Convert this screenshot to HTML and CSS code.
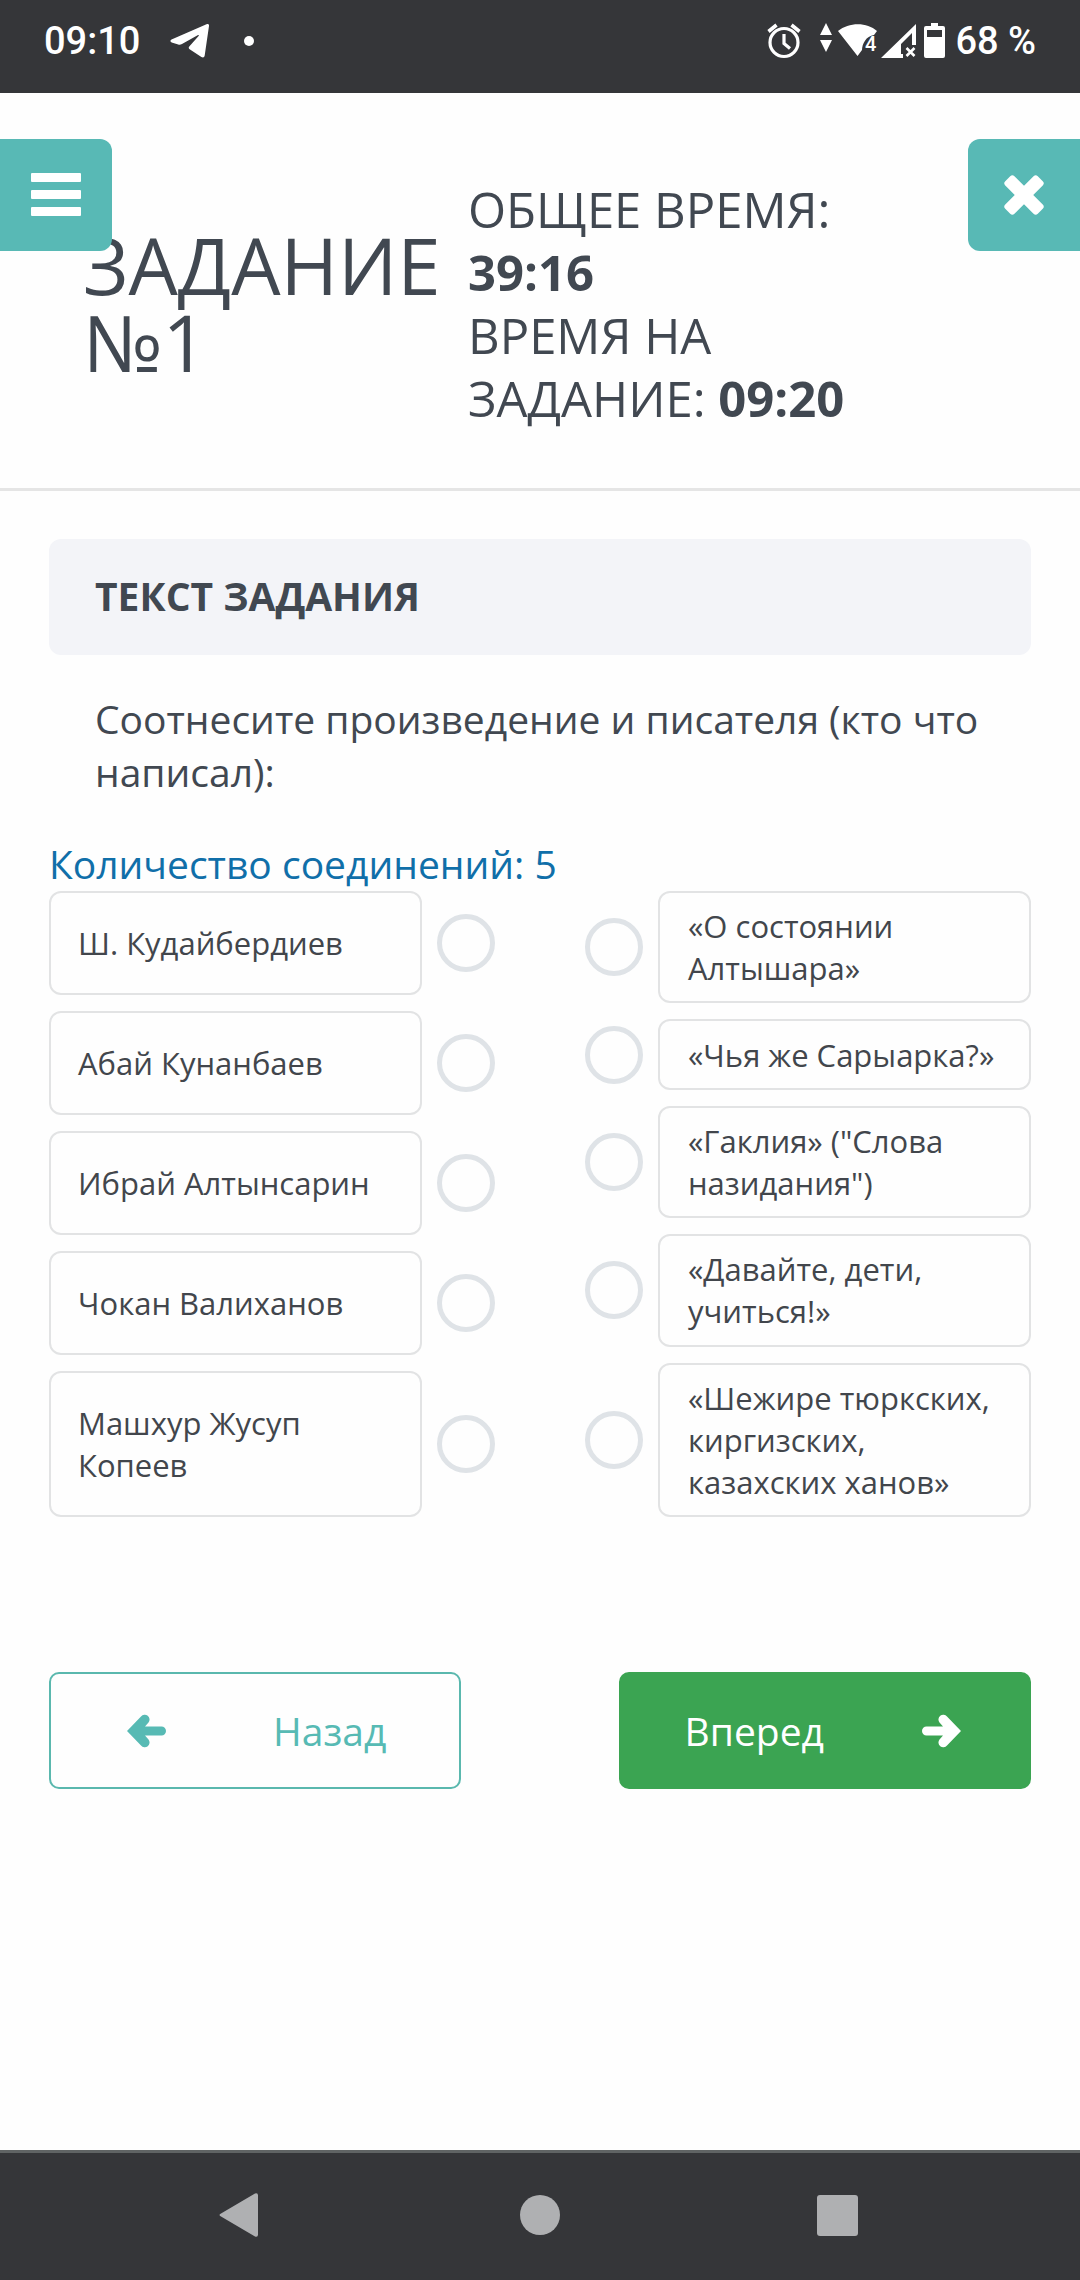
FILE: index.html
```html
<!DOCTYPE html>
<html lang="ru">
<head>
<meta charset="utf-8">
<meta name="viewport" content="width=device-width, initial-scale=1">
<title>Задание №1</title>
<link rel="stylesheet" href="styles.css">
</head>
<body>
<div class="screen">
  <div class="status">
    <div class="status-group">
      <span class="status-time">09:10</span>
      <svg class="telegram" width="40" height="36" viewBox="0 0 40 36" fill="#fff" aria-hidden="true"><path d="M1.500 16.500 36.500 1.200C38.300 .500 39.300 1.300 39 3L34.700 32.500C34.400 34.500 33 35 31.400 34L20 26.500C18.400 25.300 18.300 24.300 19.700 22.900L28.600 12.900C29.200 12 28.500 11.600 27.600 12.200L12 20.900C10.600 21.700 9.600 21.900 8.200 21.500L1.700 19.400C0 18.800 0 17.200 1.500 16.500Z"/></svg>
      <span class="dot"></span>
    </div>
    <div class="status-group">
      <svg width="180" height="36" viewBox="766 23 180 36" aria-hidden="true">
        <g fill="none" stroke="#fff">
          <circle cx="783" cy="42.500" r="14" stroke-width="3.200"/>
          <path d="M783 34v9.500l6 5" stroke-width="3.200"/>
          <path d="M767.500 31.500l8-6.500M798.500 31.500l-8-6.500" stroke-width="3.600"/>
          <path d="M905.500 48l8 8m0-8l-8 8" stroke-width="2.600"/>
        </g>
        <g fill="#fff">
          <path d="M825 23l6 12h-12zM825 52l6-12h-12z"/>
          <path d="M837 31C848 22 866 22 876 31L873 35C865 36 861 44 861 50L856.500 56Z"/>
          <path fill-rule="evenodd" d="M915 24V45h-4V33L900 44V54h2v4H880Z"/>
          <path fill-rule="evenodd" d="M930 23h7v3h5q2 0 2 2v28q0 2-2 2h-17q-2 0-2-2V28q0-2 2-2h5zM926 30v7h15v-7z"/>
          <text x="864" y="51" class="wifi-digit">4</text>
        </g>
      </svg>
      <span class="status-battery">68 %</span>
    </div>
  </div>

  <header class="header">
    <h1 class="title">Задание №1</h1>
    <div class="timers">
      <div>Общее время: <b>39:16</b></div>
      <div>Время на задание: <b>09:20</b></div>
    </div>
    <button class="corner corner-menu" type="button" aria-label="Меню">
      <svg width="50" height="44" viewBox="0 0 50 44" fill="#fff" aria-hidden="true"><rect width="50" height="9" rx="1"/><rect y="17" width="50" height="9" rx="1"/><rect y="34" width="50" height="9" rx="1"/></svg>
    </button>
    <button class="corner corner-close" type="button" aria-label="Закрыть">
      <svg width="40" height="40" viewBox="0 0 40 40" fill="#fff" aria-hidden="true"><g transform="rotate(45 20 20)"><rect x="-3" y="13.500" width="46" height="13" rx="3"/><rect x="13.500" y="-3" width="13" height="46" rx="3"/></g></svg>
    </button>
  </header>

  <main class="main">
    <h2 class="section-title">Текст задания</h2>
    <p class="question">Соотнесите произведение и писателя (кто что написал):</p>
    <p class="count">Количество соединений: 5</p>

    <form class="match">
      <div class="column authors">
        <label class="item"><span class="card">Ш. Кудайбердиев</span><input type="radio" name="author"></label>
        <label class="item"><span class="card">Абай Кунанбаев</span><input type="radio" name="author"></label>
        <label class="item"><span class="card">Ибрай Алтынсарин</span><input type="radio" name="author"></label>
        <label class="item"><span class="card">Чокан Валиханов</span><input type="radio" name="author"></label>
        <label class="item"><span class="card">Машхур Жусуп Копеев</span><input type="radio" name="author"></label>
      </div>
      <div class="column works">
        <label class="item"><input type="radio" name="work"><span class="card">«О состоянии Алтышара»</span></label>
        <label class="item"><input type="radio" name="work"><span class="card">«Чья же Сарыарка?»</span></label>
        <label class="item"><input type="radio" name="work"><span class="card">«Гаклия» ("Слова назидания")</span></label>
        <label class="item"><input type="radio" name="work"><span class="card">«Давайте, дети, учиться!»</span></label>
        <label class="item"><input type="radio" name="work"><span class="card">«Шежире тюркских, киргизских, казахских ханов»</span></label>
      </div>
    </form>

    <div class="actions">
      <button class="action back" type="button">
        <svg width="39" height="34" viewBox="0 0 39 34" aria-hidden="true"><path d="M0 17 14 2.500A4.600 4.600 0 0 1 21.500 8.500L18 12.500H34.500A4.500 4.500 0 0 1 34.500 21.500H18L21.500 25.500A4.600 4.600 0 0 1 14 31.500Z" fill="currentColor"/></svg>
        <span>Назад</span>
      </button>
      <button class="action next" type="button">
        <span>Вперед</span>
        <svg width="39" height="34" viewBox="0 0 39 34" aria-hidden="true"><path d="M39 17 25 2.500A4.600 4.600 0 0 0 17.500 8.500L21 12.500H4.500A4.500 4.500 0 0 0 4.500 21.500H21L17.500 25.500A4.600 4.600 0 0 0 25 31.500Z" fill="currentColor"/></svg>
      </button>
    </div>
  </main>

  <nav class="system-nav">
    <button type="button" aria-label="Назад"><svg width="48" height="48" viewBox="0 0 48 48" fill="#afb0b2" aria-hidden="true"><path d="M3 22.500 37 2.500Q40 1.500 40 4.500V43.500Q40 46.500 37 45.500L3 25.500Q0 24 3 22.500Z"/></svg></button>
    <button type="button" aria-label="Домой"><svg width="48" height="48" viewBox="0 0 48 48" fill="#afb0b2" aria-hidden="true"><circle cx="24" cy="24" r="20"/></svg></button>
    <button type="button" aria-label="Недавние"><svg width="48" height="48" viewBox="0 0 48 48" fill="#afb0b2" aria-hidden="true"><rect x="3" y="4" width="41" height="41" rx="3"/></svg></button>
  </nav>
</div>
</body>
</html>
```
FILE: styles.css
```css
* {
  box-sizing: border-box;
}

body {
  margin: 0;
  background: #fefefe;
  color: #414851;
  font-family: "Open Sans", "Noto Sans", sans-serif;
  font-size: 39px;
  line-height: 53px;
}

button {
  border: 0;
  padding: 0;
  background: none;
  color: inherit;
  font: inherit;
  cursor: pointer;
}

svg {
  display: block;
  flex: none;
}

.screen {
  display: flex;
  flex-direction: column;
  min-height: 100vh;
}

/* Status bar */

.status {
  display: flex;
  justify-content: space-between;
  align-items: center;
  padding: 18px 44px 29px;
  background: #353639;
  color: #fff;
  font: 500 38px/46px Roboto, sans-serif;
}

.status-group {
  display: flex;
  align-items: center;
}

.telegram {
  margin-left: 30px;
}

.dot {
  width: 10px;
  height: 10px;
  margin-left: 34px;
  border-radius: 50%;
  background: #fff;
}

.status-battery {
  margin-left: 8px;
}

.wifi-digit {
  font: 500 20px Roboto, sans-serif;
}

/* Header */

.header {
  position: relative;
  display: grid;
  grid-template-columns: 385px minmax(0, 440px);
  align-items: center;
  padding: 85px 82px 58px 83px;
  border-bottom: 3px solid #e5e5e5;
  text-transform: uppercase;
}

.title {
  margin: 0;
  font-size: 78px;
  font-weight: 400;
  line-height: 77px;
}

.timers {
  font-size: 49px;
  line-height: 63px;
}

.corner {
  position: absolute;
  top: 46px;
  display: grid;
  place-items: center;
  width: 112px;
  height: 112px;
  background: #58b9b5;
}

.corner-menu {
  left: 0;
  border-radius: 0 12px 12px 0;
}

.corner-close {
  right: 0;
  border-radius: 12px 0 0 12px;
}

/* Task */

.main {
  flex: 1;
  padding: 48px 49px;
}

.section-title {
  margin: 0;
  padding: 31px 46px 33px;
  border-radius: 12px;
  background: #f3f4f8;
  font-size: 39px;
  font-weight: 700;
  line-height: 52px;
  text-transform: uppercase;
}

.question {
  margin: 37px 46px 39px;
}

.count {
  margin: 0 0 1px;
  color: #106fa9;
}

.match {
  display: flex;
  justify-content: space-between;
  gap: 90px;
}

.column {
  display: flex;
  flex: 1;
  flex-direction: column;
  gap: 16px;
}

.item {
  display: flex;
  flex: 1 0 auto;
  align-items: center;
  gap: 15px;
}

.card {
  display: flex;
  flex: 1;
  align-items: center;
  align-self: stretch;
  padding: 12px 28px;
  border: 2px solid #e2e3e4;
  border-radius: 12px;
  color: #42464c;
  font-size: 31px;
  line-height: 42px;
}

.authors .card {
  padding: 29px 27px;
}

.item input {
  appearance: none;
  flex: none;
  width: 58px;
  height: 58px;
  margin: 0;
  border: 5px solid #dfe3e7;
  border-radius: 50%;
}

.actions {
  display: flex;
  justify-content: space-between;
  margin-top: 155px;
}

.action {
  display: flex;
  justify-content: space-between;
  align-items: center;
  width: 42%;
  padding: 30px 73px 30px 76px;
  border: 2px solid #5ab8ae;
  border-radius: 10px;
  color: #57bab4;
}

.next {
  padding: 30px 68px 30px 64px;
  border-color: #3ba452;
  background: #3ba452;
  color: #fff;
}

/* System navigation */

.system-nav {
  display: flex;
  justify-content: center;
  gap: 250px;
  padding: 38px 0 41px;
  border-top: 3px solid #606464;
  background: #353639;
}
```
